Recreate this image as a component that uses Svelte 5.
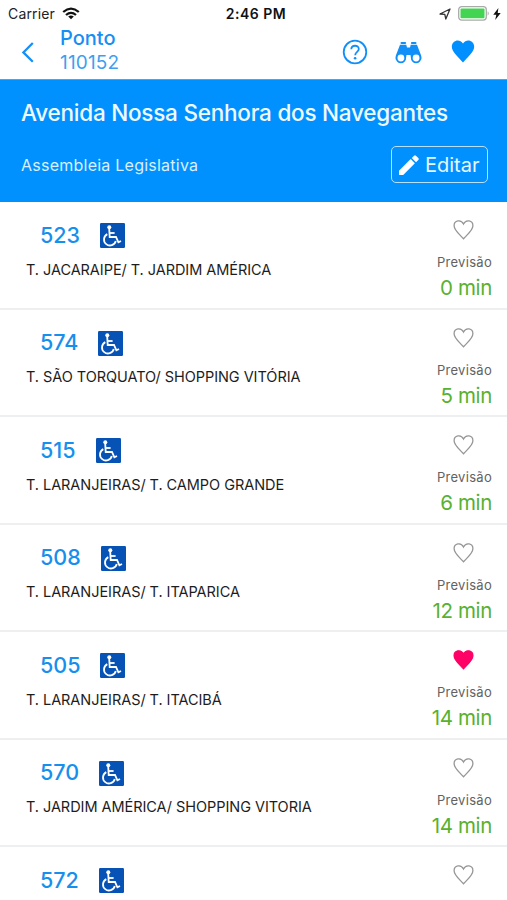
<script>
  const lines = [
    { number: '523', route: 'T. JACARAIPE/ T. JARDIM AMÉRICA', eta: '0 min', favorite: false },
    { number: '574', route: 'T. SÃO TORQUATO/ SHOPPING VITÓRIA', eta: '5 min', favorite: false },
    { number: '515', route: 'T. LARANJEIRAS/ T. CAMPO GRANDE', eta: '6 min', favorite: false },
    { number: '508', route: 'T. LARANJEIRAS/ T. ITAPARICA', eta: '12 min', favorite: false },
    { number: '505', route: 'T. LARANJEIRAS/ T. ITACIBÁ', eta: '14 min', favorite: true },
    { number: '570', route: 'T. JARDIM AMÉRICA/ SHOPPING VITORIA', eta: '14 min', favorite: false },
    { number: '572', route: '', eta: '', favorite: false }
  ];
</script>

<div class="screen">
  <div class="status">
    <div class="carrier">
      <span>Carrier</span>
      <svg width="18" height="13" viewBox="0 0 18 13" fill="none" stroke="#111" stroke-width="2.3">
        <path d="M1.2 5Q9 -1.8 16.8 5M4 8Q9 3.7 14 8" />
        <path d="M9 12.2L6.2 9.5Q9 7.4 11.8 9.5Z" fill="#111" stroke="none" />
      </svg>
    </div>
    <span class="time">2:46 PM</span>
    <div class="power">
      <svg width="12" height="12" viewBox="0 0 12 12" fill="none" stroke="#333" stroke-width="1.3" stroke-linejoin="round">
        <path d="M1 6L11 1L6.8 11L5.8 6.3Z" />
      </svg>
      <svg class="battery" width="32" height="15" viewBox="0 0 32 15">
        <rect x=".7" y=".7" width="27.6" height="13.4" rx="3" fill="#fff" stroke="#aaa" stroke-width="1.3" />
        <rect x="2.5" y="2.5" width="24" height="9.8" rx="1" fill="#43d551" />
        <path d="M29.7 5.2Q31.8 7.4 29.7 9.7Z" fill="#aaa" />
      </svg>
      <svg class="bolt" width="8" height="12" viewBox="0 0 8 12"><path d="M5.4 0L.3 6.7H3.3L2.2 12L7.7 4.9H4.7Z" fill="#111" /></svg>
    </div>
  </div>

  <header>
    <svg class="back" width="13" height="21" viewBox="0 0 13 21"><path d="M11.8 1L2.4 10.4L11.8 19.8" fill="none" stroke="#1590f5" stroke-width="2.3" /></svg>
    <div class="heading">
      <div class="name">Ponto</div>
      <div class="code">110152</div>
    </div>
    <div class="actions">
      <svg width="26" height="26" viewBox="0 0 26 26" fill="none" stroke="#118ff8" stroke-width="1.8">
        <circle cx="13" cy="13" r="11.3" />
        <path d="M9.3 10.3C9.3 5.5 16.8 5.7 16.8 10C16.8 12.8 13.2 13 13.2 16.2" />
        <circle cx="13.1" cy="19.2" r="1.3" fill="#118ff8" stroke="none" />
      </svg>
      <svg class="binoculars" width="27" height="22" viewBox="0 0 27 22" fill="#118ff8">
        <rect x="5.5" y="0" width="5.6" height="2" rx="1" />
        <rect x="15.9" y="0" width="5.6" height="2" rx="1" />
        <path d="M5 2.8H11.3L12 5.4H15L15.7 2.8H22L26.3 14V17.5H16.2L15.5 13H11.5L10.8 17.5H.7V14Z" />
        <circle cx="5.9" cy="16" r="4.3" fill="#fff" stroke="#118ff8" stroke-width="1.8" />
        <circle cx="21.1" cy="16" r="4.3" fill="#fff" stroke="#118ff8" stroke-width="1.8" />
      </svg>
      <svg width="24" height="23" viewBox="0 0 24 23"><path d="M12 22.5C8 18 .8 11.8 .8 6.8C.8 .2 8.8 -1.8 12 3.6C15.2 -1.8 23.2 .2 23.2 6.8C23.2 11.8 16 18 12 22.5Z" fill="#008fff" /></svg>
    </div>
  </header>

  <section class="stop">
    <h1>Avenida Nossa Senhora dos Navegantes</h1>
    <div class="detail">
      <span class="reference">Assembleia Legislativa</span>
      <button>
        <svg width="20" height="20" viewBox="0 0 20 20" fill="#fff"><path d="M0 15.8L11.7 4.1L15.9 8.3L4.2 20H0ZM12.8 3L15.1 .7Q16 -.2 16.9 .7L19.3 3.1Q20.2 4 19.3 4.9L17 7.2Z" /></svg>
        <span>Editar</span>
      </button>
    </div>
  </section>

  <main>
    {#each lines as line}
      <article>
        <div class="info">
          <div class="line">
            <span class="number">{line.number}</span>
            <svg width="25" height="25" viewBox="0 0 25 25">
              <rect width="25" height="25" rx="1.2" fill="#0753b5" />
              <circle cx="9.3" cy="4.2" r="2" fill="#fff" />
              <g fill="none" stroke="#fff" stroke-width="1.8">
                <path d="M9.2 5.5L9.7 14H16L18.4 19.3L21 18" />
                <path d="M9.6 10H14.6" />
                <path d="M7.3 11.1A6 6 0 1 0 15.8 18" />
              </g>
            </svg>
          </div>
          <div class="route">{line.route}</div>
        </div>
        <div class="forecast">
          <svg width="21" height="20" viewBox="0 0 21 20"><path d="M10.5 18.8C7 14.8 1.1 10.2 1.1 5.7C1.1 .3 8 -1 10.5 4C13 -1 19.9 .3 19.9 5.7C19.9 10.2 14 14.8 10.5 18.8Z" fill={line.favorite ? '#ff0066' : '#fff'} stroke={line.favorite ? '#ff0066' : '#969696'} stroke-width="1.3" /></svg>
          {#if line.eta}
            <span class="label">Previsão</span>
            <span class="eta">{line.eta}</span>
          {/if}
        </div>
      </article>
    {/each}
  </main>
</div>

<style>
  :global(body) { margin: 0; overflow: hidden; }
  .screen { width: 507px; height: 900px; overflow: hidden; display: flex; flex-direction: column; background: #fff; font-family: Inter, "Liberation Sans", sans-serif; box-sizing: border-box; }
  svg { display: block; flex: none; }
  .status { height: 27px; flex: none; display: grid; grid-template-columns: 1fr auto 1fr; align-items: center; padding: 0 6px 0 8px; font-size: 14px; color: #222; }
  .carrier { display: flex; align-items: center; gap: 7px; letter-spacing: .15px; }
  .time { font-weight: 600; color: #111; letter-spacing: .5px; margin-left: 3px; }
  .power { display: flex; align-items: center; justify-content: flex-end; }
  .battery { margin-left: 7px; }
  .bolt { margin-left: 3px; }
  header { height: 53px; flex: none; display: flex; align-items: flex-start; box-sizing: border-box; border-bottom: 1px solid #40a8f4; padding-left: 21px; }
  .back { margin-top: 15px; }
  .heading { margin-left: 26px; color: #168ff3; }
  .name { font-size: 20px; font-weight: 500; line-height: 23px; }
  .code { font-size: 19px; line-height: 25px; color: #3f9fee; letter-spacing: .15px; }
  .actions { margin-left: auto; padding: 12px 32px 0 0; display: flex; align-items: flex-start; gap: 28px; }
  .actions svg:last-child { margin-top: 1px; }
  .actions .binoculars { margin: 3px 1px 0 -1px; }
  .stop { height: 122px; flex: none; box-sizing: border-box; background: #0091ff; color: #eefaff; padding: 19px 19px 0 21px; }
  h1 { margin: 0; font-size: 22.5px; line-height: 28px; font-weight: 450; letter-spacing: -.23px; white-space: nowrap; }
  .detail { display: flex; align-items: center; justify-content: space-between; margin-top: 19px; }
  .reference { font-size: 16px; letter-spacing: .24px; color: #d8f0ff; }
  button { width: 97px; height: 37px; box-sizing: border-box; display: flex; align-items: center; gap: 6px; padding: 0 0 0 7px; border: 1.5px solid #b5e1ff; border-radius: 5px; background: transparent; color: #e6f6ff; font: 400 20px Inter, sans-serif; }
  article { height: 107.5px; box-sizing: border-box; display: flex; justify-content: space-between; border-bottom: 2px solid #eeeff0; padding: 0 15px 0 26px; }
  .line { display: flex; align-items: center; height: 25px; margin-top: 21px; padding-left: 14px; gap: 20px; }
  .number { font-size: 21.5px; line-height: 25px; padding-bottom: 1px; font-weight: 500; color: #168fed; }
  .route { margin-top: 12.5px; font-size: 14.5px; line-height: 18px; letter-spacing: -.05px; color: #1d1d1d; white-space: nowrap; }
  .forecast { display: flex; flex-direction: column; align-items: flex-end; padding-top: 18px; }
  .forecast svg { margin-right: 18px; }
  .label { margin-top: 14px; font-size: 13px; line-height: 16px; letter-spacing: .3px; color: #626262; }
  .eta { margin-top: 5px; font-size: 20.5px; line-height: 26px; letter-spacing: -.35px; color: #58b130; }
</style>
